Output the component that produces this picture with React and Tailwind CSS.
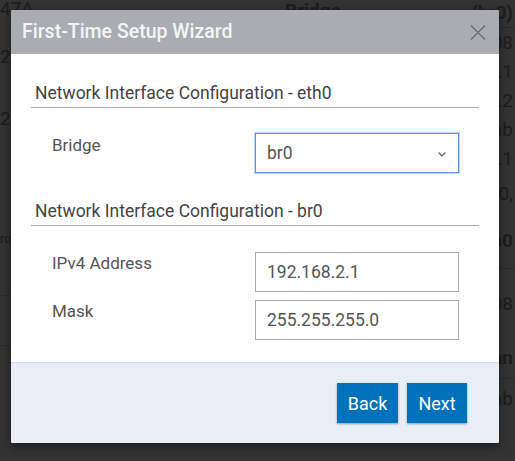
import { useState } from 'react'

const leftRows = [
  { text: '47A', h: 26 },
  { text: '27', h: 48 },
  { text: '2', h: 62 },
  { text: '', h: 70 },
  { text: 'ro', h: 90, small: true, border: true },
  { text: '', h: 50, border: true },
]

const rightRows = [
  { text: '(br0)', h: 28, bold: true, border: true },
  { text: '08', h: 30 },
  { text: '2.1', h: 28 },
  { text: '5.2', h: 30 },
  { text: 'ab', h: 28 },
  { text: '2.1', h: 30 },
  { text: '0,', h: 40 },
  { text: 'h0', h: 55, bold: true, border: true },
  { text: '08', h: 70 },
  { text: 'an', h: 40, bold: true, border: true },
  { text: 'ab', h: 40 },
]

const Field = ({ label, value }) => (
  <div className="flex items-start">
    <label className="w-[224px] pl-[21px] pt-[1px] text-[17px] leading-5 text-[#555]">
      {label}
    </label>
    <input
      readOnly
      value={value}
      className="h-10 w-[204px] border border-[#ababab] bg-white pl-[11px] text-[17.5px] text-[#555] outline-none"
    />
  </div>
)

const SectionTitle = ({ children }) => (
  <h3 className="border-b border-[#aaa] pb-1 pl-1 text-[17.5px] leading-5 text-[#444]">
    {children}
  </h3>
)

const App = () => {
  const [bridge, setBridge] = useState('br0')

  return (
    <div
      className="relative h-[461px] w-[515px] overflow-hidden bg-[#333]"
      style={{ fontFamily: 'Roboto, "Liberation Sans", sans-serif' }}
    >
      {/* page behind the modal overlay */}
      <div className="flex text-[19px] text-[#1d1d1d]">
        <div className="w-[120px]">
          {leftRows.map((r, i) => (
            <div
              key={i}
              className={`flex items-end ${r.border ? 'border-b border-[#2a2a2a]' : ''} ${r.small ? 'text-xs' : ''}`}
              style={{ height: r.h }}
            >
              <span className={r.small ? 'mb-[48px]' : 'mb-[8px] leading-none'}>{r.text}</span>
            </div>
          ))}
        </div>
        <div className="w-[165px]" />
        <div className="w-[185px] pt-[1px] font-bold leading-none">Bridge</div>
        <div className="w-[45px]">
          {rightRows.map((r, i) => (
            <div
              key={i}
              className={`flex items-center justify-end pr-[2px] ${r.bold ? 'font-bold' : ''} ${r.border ? 'border-b border-[#2a2a2a]' : ''}`}
              style={{ height: r.h }}
            >
              {r.text}
            </div>
          ))}
        </div>
      </div>

      {/* modal */}
      <div className="absolute left-[11px] top-[10px] flex h-[433px] w-[488px] flex-col overflow-hidden rounded-[2px] bg-white shadow-[0_3px_10px_rgba(0,0,0,0.5)]">
        <div className="flex h-[44px] shrink-0 items-center justify-between bg-[#a9acb0] pl-[11px] pr-[11px]">
          <h2 className="text-[19.5px] font-medium text-[#f5f5f5]">First-Time Setup Wizard</h2>
          <button className="flex h-5 w-5 items-center justify-center">
            <svg width="16" height="15" viewBox="0 0 16 15">
              <path d="M1 0.5 L15 14.5 M15 0.5 L1 14.5" stroke="#6b6e72" strokeWidth="1.4" fill="none" />
            </svg>
          </button>
        </div>

        <div className="flex-1 px-5 pt-[29px]">
          <SectionTitle>Network Interface Configuration - eth0</SectionTitle>
          <div className="mt-[25px] flex items-start">
            <label className="w-[224px] pl-[21px] pt-[2px] text-[17px] leading-5 text-[#555]">Bridge</label>
            <div className="relative h-10 w-[204px]">
              <select
                value={bridge}
                onChange={(e) => setBridge(e.target.value)}
                className="h-10 w-full appearance-none border border-[#5b94e5] bg-white pl-[11px] text-[17.5px] text-[#555] shadow-[0_0_0_1px_rgba(120,165,235,0.45)] outline-none"
              >
                <option value="br0">br0</option>
                <option value="none">None</option>
              </select>
              <svg className="pointer-events-none absolute right-[13px] top-[19px]" width="8" height="5" viewBox="0 0 8 5">
                <path d="M0.5 0.5 L4 4 L7.5 0.5" stroke="#666" strokeWidth="1.2" fill="none" />
              </svg>
            </div>
          </div>

          <div className="mt-[28px]">
            <SectionTitle>Network Interface Configuration - br0</SectionTitle>
          </div>
          <div className="mt-[26px] flex flex-col gap-2">
            <Field label="IPv4 Address" value="192.168.2.1" />
            <Field label="Mask" value="255.255.255.0" />
          </div>
        </div>

        <div className="flex h-[81px] shrink-0 items-center justify-end gap-[9px] border-t border-[#d3dce7] bg-[#e9eef6] pr-[32px]">
          <button className="h-10 w-[61px] bg-[#0071bb] text-[18px] text-white shadow-[0_1px_2px_rgba(0,0,0,0.35)]">
            Back
          </button>
          <button className="h-10 w-[60px] bg-[#0071bb] text-[18px] text-white shadow-[0_1px_2px_rgba(0,0,0,0.35)]">
            Next
          </button>
        </div>
      </div>
    </div>
  )
}

export default App
